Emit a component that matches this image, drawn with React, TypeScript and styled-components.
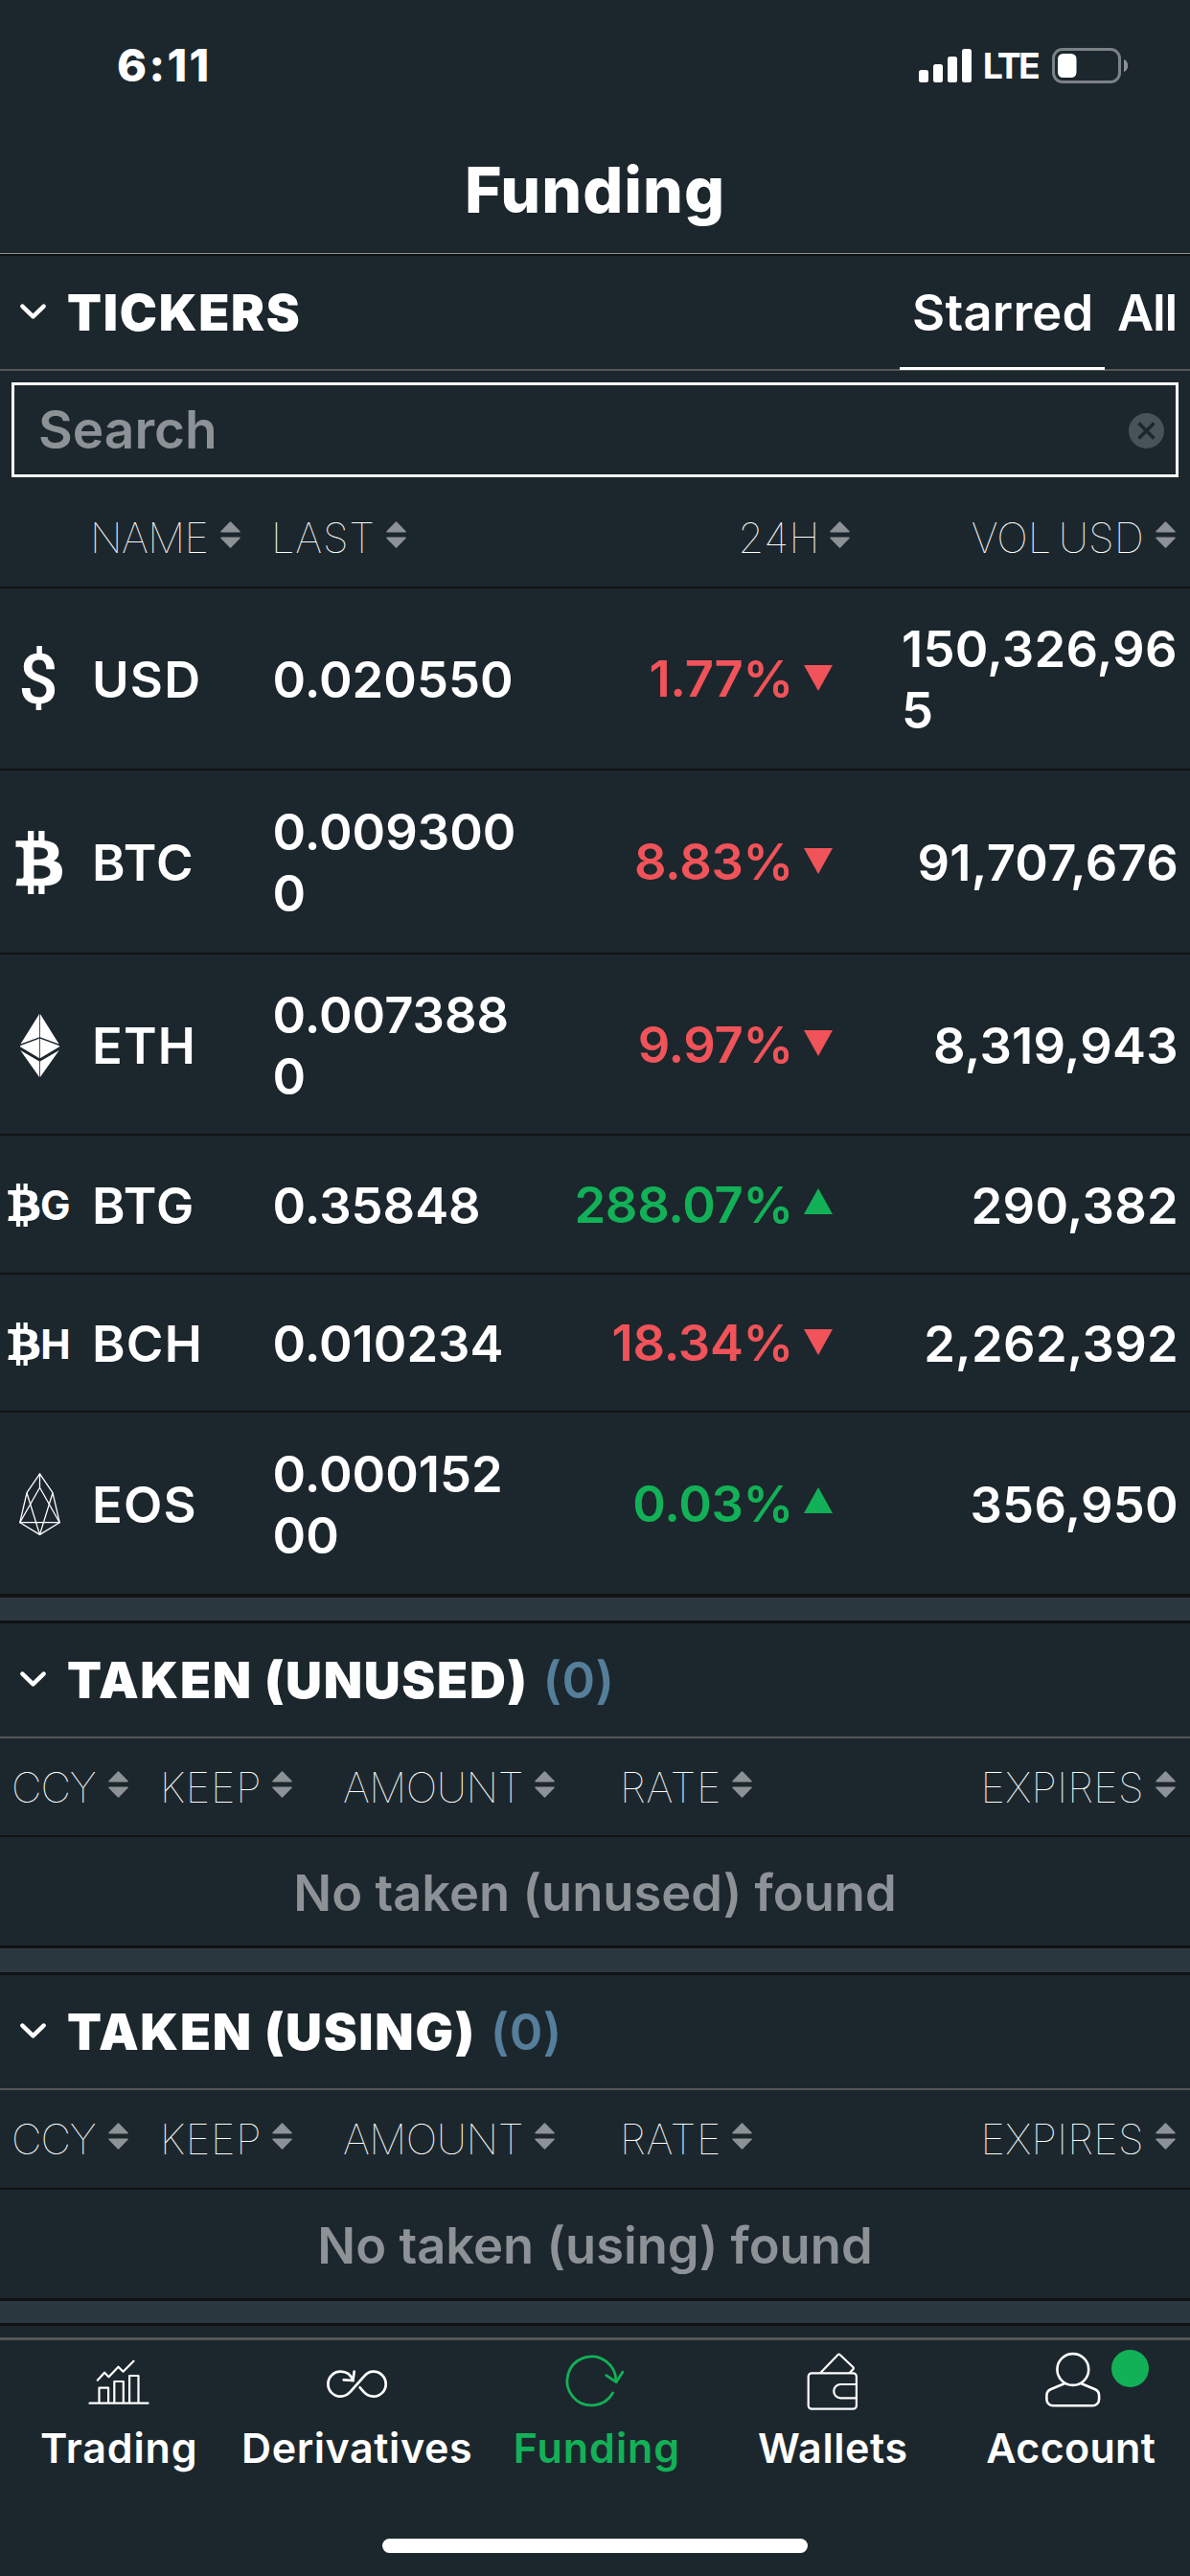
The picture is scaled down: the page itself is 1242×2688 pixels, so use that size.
import React from 'react';
import styled, { createGlobalStyle } from 'styled-components';
import { FaBtc } from 'react-icons/fa';

const color = {
  bg: '#1c272d',
  band: '#2c3840',
  dark: '#111213',
  rule: '#555657',
  muted: '#8d9296',
  clear: '#485259',
  count: '#557e9b',
  red: '#f05359',
  green: '#12b157',
  white: '#ffffff',
};

const GlobalStyle = createGlobalStyle`
  *, *::before, *::after { box-sizing: border-box; }
  body {
    margin: 0;
    background: ${color.bg};
    color: ${color.white};
    font-family: Inter, "Liberation Sans", sans-serif;
  }
  svg { display: block; flex: none; }
`;

const Screen = styled.div`
  display: flex;
  flex-direction: column;
  width: 1242px;
  height: 2688px;
  overflow: hidden;
  background: ${color.bg};
`;

/* ---------- status bar and title ---------- */

const StatusBar = styled.header`
  display: flex;
  align-items: center;
  justify-content: space-between;
  height: 136px;
  padding: 0 65px 0 122px;
`;

const Clock = styled.span`
  font-size: 47px;
  font-weight: 800;
  letter-spacing: 2.4px;
  line-height: 56px;
`;

const StatusIcons = styled.div`
  display: flex;
  align-items: center;
`;

const Network = styled.span`
  margin: 2px 15px 0 12px;
  font-size: 37.5px;
  font-weight: 700;
  letter-spacing: -2.8px;
  line-height: 44px;
`;

const TitleBar = styled.div`
  display: flex;
  align-items: center;
  justify-content: center;
  height: 129px;
  padding-bottom: 5px;
  border-bottom: 1px solid #8b8f91;
`;

const Title = styled.h1`
  margin: 0;
  font-size: 66px;
  font-weight: 800;
  letter-spacing: 1px;
  line-height: 80px;
`;

/* ---------- sections ---------- */

const Content = styled.main`
  flex: 1;
  min-height: 0;
  overflow: hidden;
`;

const Section = styled.section<{ $top: number; $bottom: number }>`
  border-top: ${(p) => p.$top}px solid ${color.dark};
  border-bottom: ${(p) => p.$bottom}px solid ${color.dark};
`;

const Band = styled.div<{ $height: number }>`
  height: ${(p) => p.$height}px;
  background: ${color.band};
`;

const SectionHeader = styled.div`
  display: flex;
  align-items: stretch;
  height: 120px;
  padding-left: 21px;
  border-bottom: 2px solid ${color.rule};
`;

const SectionTitle = styled.h2`
  display: flex;
  align-items: center;
  flex: 1;
  margin: 0;
  font-size: 52.5px;
  font-weight: 900;
  letter-spacing: 1.7px;
  line-height: 64px;
  white-space: pre;

  svg { margin: -2px 22px 0 0; }
`;

const Count = styled.span`
  margin-left: 15px;
  color: ${color.count};
  font-weight: 600;
  letter-spacing: 0.4px;
`;

const Tabs = styled.div`
  display: flex;
  margin-bottom: -1px;
`;

const Tab = styled.span<{ $active?: boolean; $spacing: number }>`
  display: flex;
  align-items: center;
  width: ${(p) => (p.$active ? 214 : 89)}px;
  padding: 1px 0 0 13px;
  border-bottom: 3px solid ${(p) => (p.$active ? color.white : 'transparent')};
  font-size: 52.5px;
  font-weight: 600;
  letter-spacing: ${(p) => p.$spacing}px;
`;

const SearchBox = styled.div`
  display: flex;
  align-items: center;
  justify-content: space-between;
  height: 99px;
  margin: 12px 12px 0;
  padding: 0 12px 2px 25px;
  border: 3px solid ${color.white};
  color: ${color.muted};
  font-size: 55px;
  font-weight: 600;
  line-height: 66px;

  svg { margin-top: 3px; }
`;

/* ---------- tables ---------- */

const TickerHead = styled.div`
  display: grid;
  grid-template-columns: 96px 189px 262px 340px 54px 289px;
  align-items: center;
  height: 116px;
  padding-top: 12px;
  border-bottom: 2px solid ${color.dark};
`;

const TakenHead = styled.div<{ $height: number }>`
  display: grid;
  grid-template-columns: 155px 191px 289px 200px 1fr;
  align-items: center;
  height: ${(p) => p.$height}px;
  padding: 0 15px 0 12px;
  border-bottom: 2px solid ${color.dark};
`;

const HeadCell = styled.div<{ $col?: number; $end?: boolean; $spacing: number; $gap: number; $inset?: number }>`
  display: flex;
  align-items: center;
  gap: ${(p) => p.$gap}px;
  ${(p) => (p.$col ? `grid-column: ${p.$col};` : '')}
  justify-content: ${(p) => (p.$end ? 'flex-end' : 'flex-start')};
  ${(p) => (p.$end ? 'margin-right' : 'margin-left')}: ${(p) => p.$inset ?? 0}px;
  font-size: 43.5px;
  font-weight: 140;
  letter-spacing: ${(p) => p.$spacing}px;
  word-spacing: -5px;
  line-height: 52px;
  white-space: nowrap;

  svg { margin-bottom: 6px; }
`;

const TickerRow = styled.div<{ $height: number }>`
  display: grid;
  grid-template-columns: 96px 189px 262px 340px 54px 289px;
  align-items: center;
  height: ${(p) => p.$height}px;
  padding-top: 2px;
  border-bottom: 2px solid ${color.dark};
  font-size: 52.5px;
  font-weight: 600;
  line-height: 64px;
`;

const CoinIcon = styled.div`
  display: flex;
  align-items: center;
  justify-content: center;
  width: 82px;
`;

const DollarSign = styled.span`
  margin-right: 2px;
  font-family: Roboto, sans-serif;
  font-size: 73px;
  font-weight: 500;
  line-height: 70px;
`;

const BitcoinMark = styled(FaBtc)<{ $size: number }>`
  width: ${(p) => p.$size * 0.75}px;
  height: ${(p) => p.$size}px;
`;

const ForkLetter = styled.span`
  margin: 1px 0 0;
  font-size: 42px;
  font-weight: 700;
  line-height: 46px;
`;

const Symbol = styled.span`
  letter-spacing: 1.2px;
`;

const Last = styled.span`
  margin-left: -0.5px;
  word-break: break-all;
`;

const Change = styled.span<{ $up: boolean }>`
  display: flex;
  align-items: center;
  justify-content: flex-end;
  gap: 11px;
  margin-top: -2px;
  padding-right: 18px;
  color: ${(p) => (p.$up ? color.green : color.red)};
  letter-spacing: -0.3px;

  svg { margin-bottom: ${(p) => (p.$up ? 7 : 2)}px; }
`;

const Volume = styled.span`
  grid-column: 6;
  justify-self: end;
  letter-spacing: 0.25px;
  word-break: break-all;
`;

const EmptyRow = styled.div`
  display: flex;
  align-items: center;
  justify-content: center;
  height: 113px;
  padding-top: 2px;
  color: ${color.muted};
  font-size: 52.5px;
  font-weight: 600;
  line-height: 64px;
`;

/* ---------- bottom navigation ---------- */

const BottomBar = styled.footer`
  flex: none;
  height: 249px;
  border-top: 3px solid ${color.rule};
`;

const Nav = styled.nav`
  display: grid;
  grid-template-columns: repeat(5, 1fr);
  height: 207px;
`;

const NavItem = styled.a<{ $active?: boolean }>`
  position: relative;
  display: flex;
  flex-direction: column;
  align-items: center;
  gap: 10px;
  padding-top: 12px;
  color: ${(p) => (p.$active ? color.green : color.white)};
`;

const NavLabel = styled.span<{ $spacing: number; $shift?: number }>`
  margin-left: ${(p) => p.$shift ?? 0}px;
  font-size: 43px;
  font-weight: 600;
  letter-spacing: ${(p) => p.$spacing}px;
  line-height: 56px;
`;

const Badge = styled.i`
  position: absolute;
  top: 10px;
  left: 166px;
  width: 39px;
  height: 39px;
  border-radius: 50%;
  background: ${color.green};
`;

const HomeIndicator = styled.div`
  width: 444px;
  height: 15px;
  margin: 0 auto;
  border-radius: 8px;
  background: ${color.white};
`;

/* ---------- drawings ---------- */

const Signal = () => (
  <svg width="55" height="35" viewBox="0 0 55 35" fill="#fff">
    <rect x="0" y="22" width="10" height="13" rx="2.5" />
    <rect x="15" y="16" width="10" height="19" rx="2.5" />
    <rect x="30" y="8" width="10" height="27" rx="2.5" />
    <rect x="45" y="0" width="10" height="35" rx="2.5" />
  </svg>
);

const Battery = () => (
  <svg width="79" height="37" viewBox="0 0 79 37">
    <rect x="1.5" y="1.5" width="69" height="34" rx="9.5" fill="none" stroke="#7b8285" strokeWidth="3" />
    <rect x="6" y="6" width="19.5" height="25" rx="5.5" fill="#fff" />
    <path d="M75 12c2.6 1 4.2 3.6 4.2 6.5s-1.6 5.5-4.2 6.5z" fill="#8b9194" />
  </svg>
);

const Chevron = () => (
  <svg width="27" height="16" viewBox="0 0 27 16" fill="none" stroke="#fff" strokeWidth="4.4" strokeLinecap="round" strokeLinejoin="round">
    <path d="M2.4 2.6l11.1 10.8 11.1-10.8" />
  </svg>
);

const ClearIcon = () => (
  <svg width="37" height="37" viewBox="0 0 37 37">
    <circle cx="18.5" cy="18.5" r="18.5" fill={color.clear} />
    <path d="M10.5 10.5l16 16M26.5 10.5l-16 16" stroke={color.bg} strokeWidth="3.4" />
  </svg>
);

const SortIcon = () => (
  <svg width="21" height="28" viewBox="0 0 21 28" fill={color.muted} stroke={color.muted} strokeWidth="1.5" strokeLinejoin="round">
    <path d="M10.5 1L20 10.7H1z" />
    <path d="M10.5 27L20 17.3H1z" />
  </svg>
);

const Arrow = ({ up }: { up: boolean }) => (
  <svg width="30" height="27" viewBox="0 0 30 27" fill="currentColor">
    <path d={up ? 'M15 0L30 27H0z' : 'M15 27L0 0h30z'} />
  </svg>
);

const EthIcon = () => (
  <svg width="41" height="66" viewBox="0 0 41 66" fill="#fff">
    <path d="M20.1 0v24.3L.4 31.5zM20.9 0v24.3l19.7 7.2z" />
    <path d="M20.1 25.8v20.4L0 34.2v-.9zM20.9 25.8v20.4L41 34.2v-.9z" />
    <path d="M20.1 49.6V66L.3 38zM20.9 49.6V66L40.7 38z" />
  </svg>
);

const EosIcon = () => (
  <svg width="43" height="65" viewBox="0 0 43 65" fill="none" stroke="#fff" strokeWidth="1.3" strokeLinejoin="round">
    <path d="M21.5 .8L8 20.7.8 51.7l20.7 12.7 20.7-12.7L35 20.7z" />
    <path d="M21.5 .8v14.5L.8 51.7h41.4L21.5 15.3" />
    <path d="M8 20.7l13.5 43.7L35 20.7" />
  </svg>
);

const TradingIcon = () => (
  <svg width="80" height="62" viewBox="0 0 80 62" fill="none" stroke="currentColor" strokeWidth="2.2" strokeLinecap="round" strokeLinejoin="round">
    <path d="M9.5 53.7h61M19.5 53.7v-16h9.6v16M35.3 53.7V31h9.5v22.700M51.1 53.7V25h9.4v28.7" />
    <path d="M17.8 29.7l7.3-8 4.4 4.6 10-10.6 5 5 11-11" />
  </svg>
);

const DerivativesIcon = () => (
  <svg width="80" height="62" viewBox="0 0 80 62" fill="none" stroke="currentColor" strokeWidth="2.7" strokeLinecap="round" strokeLinejoin="round">
    <path d="M35.2 30C33.3 24 28.5 20.7 22.4 20.7a13 13 0 0 0 0 26c4.3 0 7.3-1.7 10.4-5L47 25.6c3-3.3 6-4.9 9.7-4.9a13 13 0 0 1 0 26c-4.2 0-7-1.5-9.8-4.5l-4.2-4.9" />
    <path d="M36.7 20.7l-1.3 9.3-9.7-.7" />
  </svg>
);

const FundingIcon = () => (
  <svg width="80" height="62" viewBox="0 0 80 62" fill="none" stroke="currentColor" strokeWidth="2.8" strokeLinecap="round" strokeLinejoin="round">
    <path d="M61.9 31A25.5 25.5 0 1 0 58.6 43" />
    <path d="M51.7 24.7l10.4 7 6.7-10.4" />
  </svg>
);

const WalletIcon = () => (
  <svg width="80" height="62" viewBox="0 0 80 62" fill="none" stroke="currentColor" strokeWidth="2.2" strokeLinecap="round" strokeLinejoin="round">
    <rect x="14.7" y="22.3" width="50.2" height="37.4" rx="3.5" />
    <path d="M64.9 34H48.4a7.15 7.15 0 0 0 0 14.3h16.5" />
    <path d="M27.3 22L45.7 3q.9-.9 1.8 0l13.8 13q1.2 1.2 0 2.3l-3.5 3.7" />
  </svg>
);

const AccountIcon = () => (
  <svg width="80" height="62" viewBox="0 0 80 62" fill="none" stroke="currentColor" strokeWidth="2.6" strokeLinecap="round" strokeLinejoin="round">
    <circle cx="41.8" cy="18.5" r="16.4" />
    <path d="M32.8 33.3l-14.3 6c-2.8 1.3-4.1 3.7-4.1 6.5v3.7a6.8 6.8 0 0 0 6.8 6.8h41.1a6.8 6.8 0 0 0 6.8-6.8v-3.7c0-2.8-1.3-5.2-4.1-6.5l-14.3-6" />
  </svg>
);

/* ---------- data ---------- */

interface Ticker {
  symbol: string;
  icon: React.ReactNode;
  last: string;
  change: string;
  up: boolean;
  volume: string;
  height: number;
}

const tickers: Ticker[] = [
  { symbol: 'USD', icon: <DollarSign>$</DollarSign>, last: '0.020550', change: '1.77%', up: false, volume: '150,326,965', height: 190 },
  { symbol: 'BTC', icon: <BitcoinMark $size={66} />, last: '0.0093000', change: '8.83%', up: false, volume: '91,707,676', height: 192 },
  { symbol: 'ETH', icon: <EthIcon />, last: '0.0073880', change: '9.97%', up: false, volume: '8,319,943', height: 189 },
  { symbol: 'BTG', icon: <><BitcoinMark $size={45} /><ForkLetter>G</ForkLetter></>, last: '0.35848', change: '288.07%', up: true, volume: '290,382', height: 145 },
  { symbol: 'BCH', icon: <><BitcoinMark $size={45} /><ForkLetter>H</ForkLetter></>, last: '0.010234', change: '18.34%', up: false, volume: '2,262,392', height: 144 },
  { symbol: 'EOS', icon: <EosIcon />, last: '0.00015200', change: '0.03%', up: true, volume: '356,950', height: 191 },
];

const navItems = [
  { label: 'Trading', spacing: 0.84, icon: <TradingIcon /> },
  { label: 'Derivatives', spacing: 0.58, icon: <DerivativesIcon /> },
  { label: 'Funding', spacing: 0.95, shift: 4, icon: <FundingIcon />, active: true },
  { label: 'Wallets', spacing: 0.59, icon: <WalletIcon /> },
  { label: 'Account', spacing: 0.31, icon: <AccountIcon />, badge: true },
];

const TakenSection = ({ title, empty, headHeight }: { title: string; empty: string; headHeight: number }) => (
  <Section $top={3} $bottom={3}>
    <SectionHeader>
      <SectionTitle><Chevron />{title}<Count>(0)</Count></SectionTitle>
    </SectionHeader>
    <TakenHead $height={headHeight}>
      <HeadCell $spacing={-1} $gap={13}>CCY<SortIcon /></HeadCell>
      <HeadCell $spacing={0.8} $gap={11}>KEEP<SortIcon /></HeadCell>
      <HeadCell $spacing={-0.47} $gap={12}>AMOUNT<SortIcon /></HeadCell>
      <HeadCell $spacing={0.8} $gap={11}>RATE<SortIcon /></HeadCell>
      <HeadCell $spacing={0.3} $gap={12} $end>EXPIRES<SortIcon /></HeadCell>
    </TakenHead>
    <EmptyRow>{empty}</EmptyRow>
  </Section>
);

export default function App() {
  return (
    <Screen>
      <GlobalStyle />
      <StatusBar>
        <Clock>6:11</Clock>
        <StatusIcons>
          <Signal />
          <Network>LTE</Network>
          <Battery />
        </StatusIcons>
      </StatusBar>
      <TitleBar>
        <Title>Funding</Title>
      </TitleBar>
      <Content>
        <Section $top={2} $bottom={2}>
          <SectionHeader>
            <SectionTitle><Chevron />TICKERS</SectionTitle>
            <Tabs>
              <Tab $active $spacing={0.24}>Starred</Tab>
              <Tab $spacing={-1.2}>All</Tab>
            </Tabs>
          </SectionHeader>
          <SearchBox>
            Search
            <ClearIcon />
          </SearchBox>
          <TickerHead>
            <HeadCell $col={2} $spacing={-0.6} $gap={13} $inset={-2}>NAME<SortIcon /></HeadCell>
            <HeadCell $col={3} $spacing={0.8} $gap={11} $inset={-2}>LAST<SortIcon /></HeadCell>
            <HeadCell $col={4} $spacing={0.5} $gap={10} $end>24H<SortIcon /></HeadCell>
            <HeadCell $col={6} $spacing={0.1} $gap={12} $end $inset={3}>VOL USD<SortIcon /></HeadCell>
          </TickerHead>
          {tickers.map((t) => (
            <TickerRow key={t.symbol} $height={t.height}>
              <CoinIcon>{t.icon}</CoinIcon>
              <Symbol>{t.symbol}</Symbol>
              <Last>{t.last}</Last>
              <Change $up={t.up}>{t.change}<Arrow up={t.up} /></Change>
              <Volume>{t.volume}</Volume>
            </TickerRow>
          ))}
        </Section>
        <Band $height={24} />
        <TakenSection title="TAKEN (UNUSED)" empty="No taken (unused) found" headHeight={103} />
        <Band $height={25} />
        <TakenSection title="TAKEN (USING)" empty="No taken (using) found" headHeight={104} />
        <Band $height={23} />
        <Section $top={3} $bottom={0} />
      </Content>
      <BottomBar>
        <Nav>
          {navItems.map((n) => (
            <NavItem key={n.label} $active={n.active}>
              {n.icon}
              <NavLabel $spacing={n.spacing} $shift={n.shift}>{n.label}</NavLabel>
              {n.badge && <Badge />}
            </NavItem>
          ))}
        </Nav>
        <HomeIndicator />
      </BottomBar>
    </Screen>
  );
}
